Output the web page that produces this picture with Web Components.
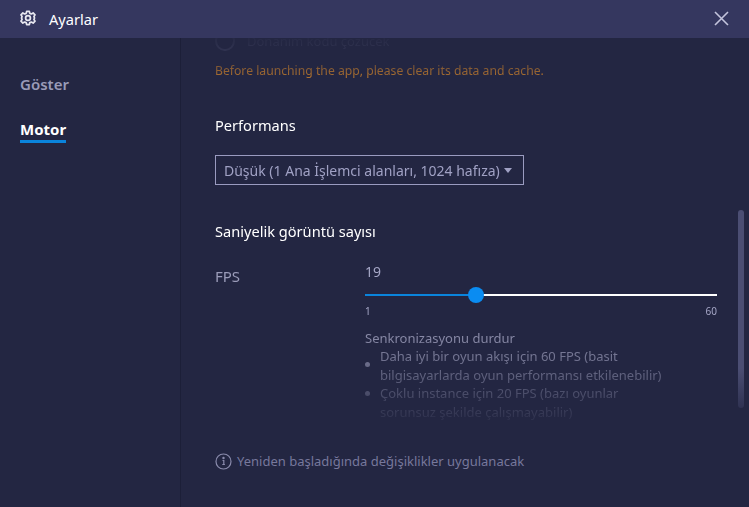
<!DOCTYPE html>
<html lang="tr">
<head>
<meta charset="utf-8">
<title>Ayarlar</title>
<style>
    html, body { margin: 0; height: 100%; background: #232642; }
    body { font-family: 'Noto Sans', 'Open Sans', sans-serif; overflow: hidden; }
</style>
</head>
<body>
<settings-window></settings-window>

<script>
const FONT = `'Noto Sans', 'Open Sans', sans-serif`;

class TitleBar extends HTMLElement {
    constructor() {
        super();
        this.attachShadow({ mode: 'open' });
    }

    connectedCallback() {
        this.shadowRoot.innerHTML = `
            <style>
                :host {
                    display: flex;
                    align-items: center;
                    height: 38px;
                    flex: none;
                    padding: 0 20px;
                    background: #35375f;
                    color: #fff;
                    font: 14.6px ${FONT};
                    position: relative;
                    z-index: 2;
                }
                svg.gear { width: 16px; height: 16px; margin-right: 13px; margin-top: -2px; }
                .title { flex: 1; }
                svg.close { width: 15px; height: 15px; margin-top: -1px; }
            </style>
            <svg class="gear" viewBox="0 0 24 24" fill="none" stroke="#e8e8f0" stroke-width="2.600" stroke-linejoin="round">
                <path d="M10 2h4l.7 3 2.300 1 2.700-1.600 2.800 2.800L20.900 10l.9 2-.9 2 1.600 2.800-2.800 2.800L17 18l-2.300 1-.7 3h-4l-.7-3L7 18l-2.700 1.600-2.800-2.800L3.100 14l-.9-2 .9-2-1.600-2.800 2.800-2.800L7 6l2.300-1z"/>
                <circle cx="12" cy="12" r="3.600"/>
            </svg>
            <span class="title"><slot></slot></span>
            <svg class="close" viewBox="0 0 15 15" stroke="#c3c4dc" stroke-width="1.600" fill="none"><path d="M1 1l13 13M14 1L1 14"/></svg>
        `;
    }
}

class NavItem extends HTMLElement {
    constructor() {
        super();
        this.attachShadow({ mode: 'open' });
    }

    connectedCallback() {
        this.shadowRoot.innerHTML = `
            <style>
                :host {
                    display: block;
                    width: fit-content;
                    color: #9a9bb8;
                    font: 600 15px/20px ${FONT};
                    padding-bottom: 1px;
                    border-bottom: 3px solid transparent;
                }
                :host([active]) {
                    color: #fff;
                    font-weight: 700;
                    border-bottom-color: #0a84dc;
                }
            </style>
            <slot></slot>
        `;
    }
}

class SideNav extends HTMLElement {
    constructor() {
        super();
        this.attachShadow({ mode: 'open' });
    }

    connectedCallback() {
        this.shadowRoot.innerHTML = `
            <style>
                :host {
                    display: flex;
                    flex-direction: column;
                    gap: 21px;
                    flex: none;
                    box-sizing: border-box;
                    width: 181px;
                    padding: 36px 20px 0;
                    border-right: 1px solid #1c1f38;
                }
            </style>
            <slot></slot>
        `;
    }
}

class PerfSelect extends HTMLElement {
    constructor() {
        super();
        this.attachShadow({ mode: 'open' });
    }

    connectedCallback() {
        this.shadowRoot.innerHTML = `
            <style>
                :host {
                    display: flex;
                    align-items: center;
                    gap: 4px;
                    box-sizing: border-box;
                    height: 30px;
                    width: 309px;
                    padding: 0 10px 0 8px;
                    border: 1px solid #9a9bc0;
                    color: #a0a1c4;
                    font: 14px ${FONT};
                    white-space: nowrap;
                }
                .caret {
                    width: 0;
                    height: 0;
                    border: 4px solid transparent;
                    border-top: 5px solid #a0a1c4;
                    border-bottom: 0;
                }
            </style>
            <slot></slot><span class="caret"></span>
        `;
    }
}

class FpsSlider extends HTMLElement {
    constructor() {
        super();
        this.attachShadow({ mode: 'open' });
    }

    connectedCallback() {
        const min = Number(this.getAttribute('min'));
        const max = Number(this.getAttribute('max'));
        const value = Number(this.getAttribute('value'));
        const pct = (value - min) / (max - min) * 100;
        this.shadowRoot.innerHTML = `
            <style>
                :host {
                    display: block;
                    color: #a5a6c6;
                    font: 14px ${FONT};
                }
                .value { line-height: 20px; }
                .track {
                    position: relative;
                    height: 2px;
                    margin-top: 12px;
                    background: linear-gradient(to right, #0a84dc ${pct}%, #fff ${pct}%);
                }
                .thumb {
                    position: absolute;
                    left: calc(${pct}% + 3.500px);
                    top: 1px;
                    width: 16px;
                    height: 16px;
                    margin: -8px 0 0 -8px;
                    border-radius: 50%;
                    background: #0a8cf2;
                }
                .ends {
                    display: flex;
                    justify-content: space-between;
                    margin-top: 8px;
                    font-size: 10px;
                    line-height: 14px;
                }
            </style>
            <div class="value">${value}</div>
            <div class="track"><span class="thumb"></span></div>
            <div class="ends"><span>${min}</span><span>${max}</span></div>
        `;
    }
}

class SettingsPanel extends HTMLElement {
    constructor() {
        super();
        this.attachShadow({ mode: 'open' });
    }

    connectedCallback() {
        this.shadowRoot.innerHTML = `
            <style>
                :host {
                    display: flex;
                    flex-direction: column;
                    flex: 1;
                    min-width: 0;
                    position: relative;
                    font-family: ${FONT};
                }
                .scroll {
                    height: 387px;
                    overflow: hidden;
                    padding-left: 34px;
                    -webkit-mask-image: linear-gradient(to bottom, rgba(0,0,0,.05) 0, rgba(0,0,0,.15) 12px, #000 40px, #000 282px, rgba(0,0,0,.05) 387px);
                    mask-image: linear-gradient(to bottom, rgba(0,0,0,.05) 0, rgba(0,0,0,.15) 12px, #000 40px, #000 282px, rgba(0,0,0,.05) 387px);
                }
                .inner { margin-top: -7px; width: 502px; }
                .radio {
                    display: flex;
                    align-items: center;
                    gap: 12px;
                    height: 20px;
                    color: #7c7e9f;
                    font-size: 13px;
                }
                .radio i {
                    box-sizing: border-box;
                    width: 20px;
                    height: 20px;
                    border: 2px solid #7c7e9f;
                    border-radius: 50%;
                }
                .warn {
                    margin-top: 11px;
                    color: #b0722f;
                    font-size: 12.200px;
                    line-height: 18px;
                }
                h2 {
                    margin: 0;
                    color: #fff;
                    font-size: 14.600px;
                    font-weight: 400;
                    line-height: 20px;
                }
                .perf-title { margin-top: 35px; }
                perf-select { margin-top: 20px; }
                .fps-title { margin-top: 36px; }
                .fps-row { display: flex; margin-top: 21px; }
                .fps-label { width: 150px; flex: none; margin-top: 3px; color: #9a9bb8; font-size: 15px; line-height: 22px; }
                .fps-body { flex: 1; min-width: 0; }
                .sync { margin-top: 11px; color: #9a9bb8; font-size: 13px; line-height: 18px; }
                ul { margin: 0; padding: 0 0 0 15px; list-style: none; width: 290px; }
                li { position: relative; line-height: 18.500px; font-size: 13px; }
                li::before {
                    content: '';
                    position: absolute;
                    left: -15px;
                    top: 15px;
                    width: 5px;
                    height: 5px;
                    border-radius: 50%;
                    background: currentColor;
                }
                li + li::before { top: 7px; }
                .note {
                    display: flex;
                    align-items: center;
                    gap: 5px;
                    margin: 27px 0 0 34px;
                    color: #77789c;
                    font-size: 13px;
                    line-height: 18px;
                }
                .note svg { width: 17px; height: 17px; flex: none; }
                .bar {
                    position: absolute;
                    top: 172px;
                    left: 557px;
                    width: 6px;
                    height: 198px;
                    border-radius: 3px;
                    background: linear-gradient(to bottom, #4b4e73 0, #4b4e73 80%, #2f3252 100%);
                }
            </style>
            <div class="scroll">
                <div class="inner">
                    <div class="radio"><i></i><span>Donanım kodu çözücek</span></div>
                    <div class="warn">Before launching the app, please clear its data and cache.</div>
                    <h2 class="perf-title">Performans</h2>
                    <perf-select>Düşük (1 Ana İşlemci alanları, 1024 hafıza)</perf-select>
                    <h2 class="fps-title">Saniyelik görüntü sayısı</h2>
                    <div class="fps-row">
                        <div class="fps-label">FPS</div>
                        <div class="fps-body">
                            <fps-slider min="1" max="60" value="19"></fps-slider>
                            <div class="sync">
                                Senkronizasyonu durdur
                                <ul>
                                    <li>Daha iyi bir oyun akışı için 60 FPS (basit bilgisayarlarda oyun performansı etkilenebilir)</li>
                                    <li>Çoklu instance için 20 FPS (bazı oyunlar sorunsuz şekilde çalışmayabilir)</li>
                                </ul>
                            </div>
                        </div>
                    </div>
                </div>
            </div>
            <div class="note">
                <svg viewBox="0 0 17 17" fill="none" stroke="#8a8bac" stroke-width="1.200">
                    <circle cx="8.500" cy="8.500" r="7.500"/>
                    <path d="M7.500 7.500h1.300v4M7.300 11.500h2.600" />
                    <circle cx="8.500" cy="5" r=".6" fill="#8a8bac"/>
                </svg>
                <span>Yeniden başladığında değişiklikler uygulanacak</span>
            </div>
            <span class="bar"></span>
        `;
    }
}

class SettingsWindow extends HTMLElement {
    constructor() {
        super();
        this.attachShadow({ mode: 'open' });
    }

    connectedCallback() {
        this.shadowRoot.innerHTML = `
            <style>
                :host {
                    display: flex;
                    flex-direction: column;
                    height: 507px;
                    overflow: hidden;
                    background: #232642;
                }
                .body { display: flex; flex: 1; min-height: 0; }
            </style>
            <title-bar>Ayarlar</title-bar>
            <div class="body">
                <side-nav>
                    <nav-item>Göster</nav-item>
                    <nav-item active>Motor</nav-item>
                </side-nav>
                <settings-panel></settings-panel>
            </div>
        `;
    }
}

customElements.define('title-bar', TitleBar);
customElements.define('nav-item', NavItem);
customElements.define('side-nav', SideNav);
customElements.define('perf-select', PerfSelect);
customElements.define('fps-slider', FpsSlider);
customElements.define('settings-panel', SettingsPanel);
customElements.define('settings-window', SettingsWindow);
</script>
</body>
</html>
